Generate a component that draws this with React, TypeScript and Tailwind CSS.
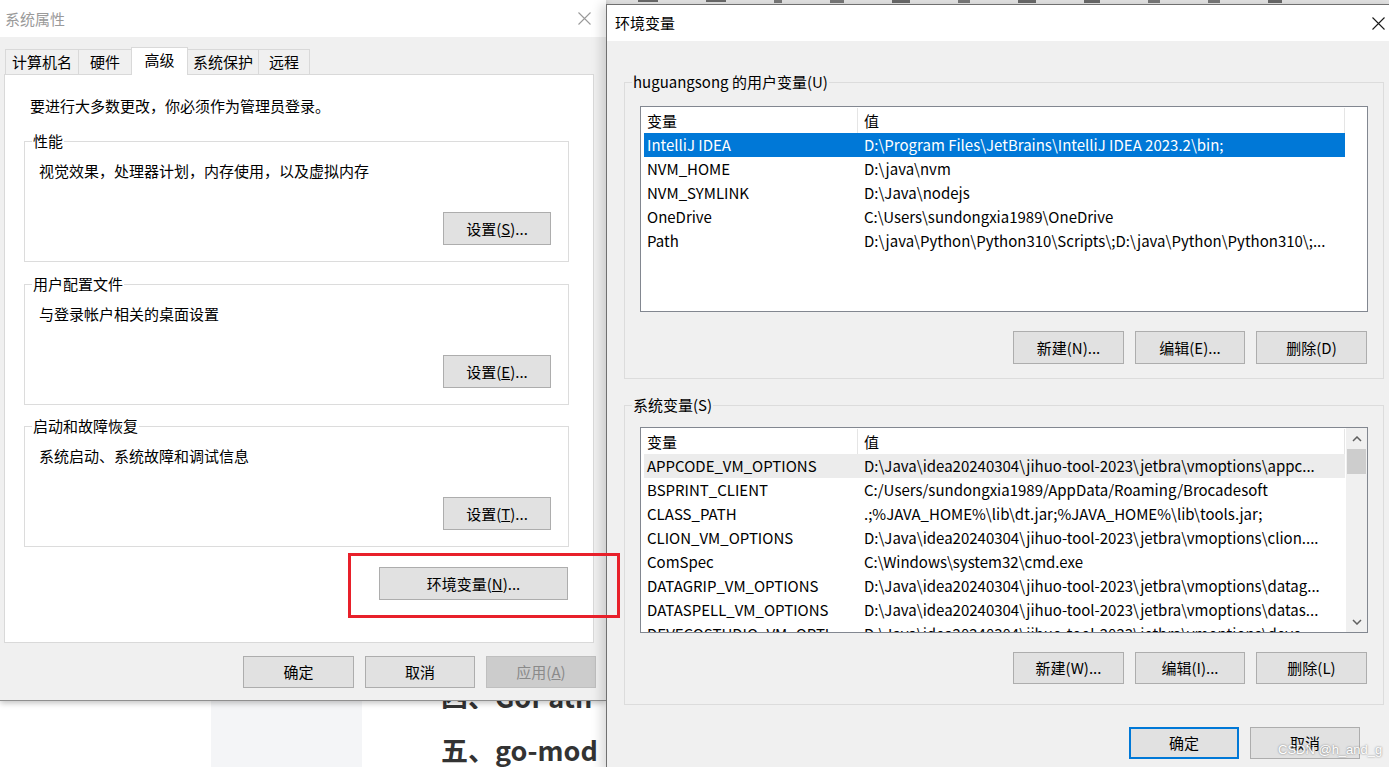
import React from "react";

const FONT = "font-['Noto_Sans_CJK_SC','Liberation_Sans',sans-serif]";

function XIcon({ color }: { color: string }) {
  return (
    <svg width="13" height="13" viewBox="0 0 13 13" className="block">
      <path d="M0.5 0.5L12.5 12.5M12.5 0.5L0.5 12.5" stroke={color} strokeWidth="1.1" fill="none" />
    </svg>
  );
}

function Chevron({ up }: { up: boolean }) {
  return (
    <svg width="10" height="6" viewBox="0 0 10 6" className="block">
      <path d={up ? "M1 5L5 1L9 5" : "M1 1L5 5L9 1"} stroke="#606060" strokeWidth="1.5" fill="none" />
    </svg>
  );
}

function Btn({ children, className }: { children: React.ReactNode; className: string }) {
  return (
    <div
      className={`flex items-center justify-center bg-[#e1e1e1] border border-[#adadad] text-[15px] leading-[20px] text-black ${className}`}
    >
      {children}
    </div>
  );
}

function Group({
  label,
  desc,
  btn,
  className,
}: {
  label: string;
  desc: string;
  btn: React.ReactNode;
  className: string;
}) {
  return (
    <fieldset className={`border border-[#dcdcdc] w-[545px] ml-[19px] ${className}`}>
      <legend className="ml-[7px] px-[1px] text-[15px] leading-[20px]">{label}</legend>
      <div className="mt-[10px] pl-[14px] h-[20px] text-[15px] leading-[20px]">{desc}</div>
      <div className="mt-[31px] pb-[16px] pr-[17px] flex justify-end">
        <Btn className="w-[108px] h-[33px]">{btn}</Btn>
      </div>
    </fieldset>
  );
}

type Row = [string, string];

const userRows: Row[] = [
  ["IntelliJ IDEA", "D:\\Program Files\\JetBrains\\IntelliJ IDEA 2023.2\\bin;"],
  ["NVM_HOME", "D:\\java\\nvm"],
  ["NVM_SYMLINK", "D:\\Java\\nodejs"],
  ["OneDrive", "C:\\Users\\sundongxia1989\\OneDrive"],
  ["Path", "D:\\java\\Python\\Python310\\Scripts\\;D:\\java\\Python\\Python310\\;..."],
];

const sysRows: Row[] = [
  ["APPCODE_VM_OPTIONS", "D:\\Java\\idea20240304\\jihuo-tool-2023\\jetbra\\vmoptions\\appc..."],
  ["BSPRINT_CLIENT", "C:/Users/sundongxia1989/AppData/Roaming/Brocadesoft"],
  ["CLASS_PATH", ".;%JAVA_HOME%\\lib\\dt.jar;%JAVA_HOME%\\lib\\tools.jar;"],
  ["CLION_VM_OPTIONS", "D:\\Java\\idea20240304\\jihuo-tool-2023\\jetbra\\vmoptions\\clion...."],
  ["ComSpec", "C:\\Windows\\system32\\cmd.exe"],
  ["DATAGRIP_VM_OPTIONS", "D:\\Java\\idea20240304\\jihuo-tool-2023\\jetbra\\vmoptions\\datag..."],
  ["DATASPELL_VM_OPTIONS", "D:\\Java\\idea20240304\\jihuo-tool-2023\\jetbra\\vmoptions\\datas..."],
  ["DEVECOSTUDIO_VM_OPTI", "D:\\Java\\idea20240304\\jihuo-tool-2023\\jetbra\\vmoptions\\deve..."],
];

function VarList({ rows, system }: { rows: Row[]; system: boolean }) {
  return (
    <div className="ml-[15px] w-[728px] h-[206px] border border-[#828790] bg-white overflow-hidden flex">
      <div className="w-[704px] pl-[3px] pt-[1px] flex flex-col shrink-0">
        <div className="flex h-[25px] shrink-0 text-[15px] leading-[20px]">
          <div className="w-[214px] pl-[3px] flex items-center border-r border-[#e5e5e5]">变量</div>
          <div className="w-[487px] pl-[6px] flex items-center border-r border-[#e5e5e5]">值</div>
        </div>
        {rows.map((r, i) => {
          const sel = i === 0;
          const rowCls = sel
            ? system
              ? "bg-[#ececec] text-black"
              : "bg-[#0078d7] text-white"
            : "text-black";
          return (
            <div key={r[0]} className={`flex h-[24px] shrink-0 w-[701px] text-[15px] leading-[20px] ${rowCls}`}>
              <div className="w-[214px] pl-[3px] flex items-center whitespace-nowrap overflow-hidden">{r[0]}</div>
              <div className="w-[487px] pl-[6px] flex items-center whitespace-nowrap overflow-hidden">{r[1]}</div>
            </div>
          );
        })}
      </div>
      {system && (
        <div className="ml-[1px] w-[21px] h-full bg-[#f0f0f0] flex flex-col shrink-0">
          <div className="h-[21px] flex items-center justify-center">
            <Chevron up={true} />
          </div>
          <div className="h-[25px] mx-[1px] bg-[#cdcdcd]" />
          <div className="flex-1" />
          <div className="h-[21px] flex items-center justify-center">
            <Chevron up={false} />
          </div>
        </div>
      )}
    </div>
  );
}

function Tab({ label, className }: { label: string; className: string }) {
  return (
    <div
      className={`-ml-[1px] flex items-center justify-center border-l border-t border-r border-[#d9d9d9] text-[15px] leading-[20px] ${className}`}
    >
      {label}
    </div>
  );
}

export default function App() {
  return (
    <div className={`relative w-[1389px] h-[767px] overflow-hidden bg-white ${FONT}`}>
      {/* background page */}
      <div className="flex flex-col h-full">
        <div className="h-[4px] bg-[#e6e6e6] flex items-start pl-[638px] gap-[48px] shrink-0">
          <div className="w-[20px] h-[2px] bg-[#6a6a6a]" />
          <div className="w-[20px] h-[2px] bg-[#6a6a6a]" />
          <div className="w-[8px] h-[3px] bg-[#7a7a7a]" />
          <div className="w-[14px] h-[3px] bg-[#7a7a7a]" />
          <div className="w-[18px] h-[3px] bg-[#6a6a6a]" />
          <div className="w-[12px] h-[3px] bg-[#7a7a7a]" />
          <div className="w-[18px] h-[3px] bg-[#6a6a6a]" />
          <div className="w-[16px] h-[3px] bg-[#6a6a6a]" />
          <div className="w-[12px] h-[3px] bg-[#7a7a7a]" />
          <div className="w-[12px] h-[3px] bg-[#7a7a7a]" />
          <div className="w-[14px] h-[3px] bg-[#6a6a6a]" />
        </div>
        <div className="flex flex-1">
          <div className="w-[211px] shrink-0" />
          <div className="w-[151px] shrink-0 bg-[#f4f5f7]" />
          <div className="pl-[79px] pt-[697px] flex flex-col text-[27px] font-bold text-[#333] leading-[40px]">
            <div className="h-[8px] overflow-hidden">
              <div className="-mt-[24px] h-[40px] whitespace-nowrap">四、GoPath</div>
            </div>
            <div className="mt-[21px] h-[40px] whitespace-nowrap">五、go-mod</div>
          </div>
        </div>
      </div>

      {/* left window: 系统属性 */}
      <div className="absolute left-0 top-0 w-[606px] h-[701px] bg-[#f0f0f0] border-b border-[#8f8f8f] shadow-[0_2px_6px_rgba(0,0,0,0.25)] flex flex-col text-black">
        <div className="h-[37px] bg-white flex items-center justify-between pl-[5px] pr-[15px] shrink-0">
          <span className="text-[15px] leading-[20px] text-[#9a9a9a]">系统属性</span>
          <XIcon color="#9a9a9a" />
        </div>
        <div className="flex-1 px-[4px] pt-[10px] flex flex-col">
          <div className="relative z-10 -mb-[1px] h-[28px] flex items-end pl-[2px]">
            <Tab label="计算机名" className="w-[74px] h-[25px] mb-[1px] bg-[#f0f0f0]" />
            <Tab label="硬件" className="w-[54px] h-[25px] mb-[1px] bg-[#f0f0f0]" />
            <Tab label="高级" className="w-[57px] h-[28px] bg-white pb-[4px]" />
            <Tab label="系统保护" className="w-[72px] h-[25px] mb-[1px] bg-[#f0f0f0]" />
            <Tab label="远程" className="w-[52px] h-[25px] mb-[1px] bg-[#f0f0f0]" />
          </div>
          <div className="h-[569px] w-[590px] bg-white border border-[#d9d9d9] pt-[21px] flex flex-col">
            <div className="pl-[25px] text-[15px] leading-[20px]">要进行大多数更改，你必须作为管理员登录。</div>
            <Group
              className="mt-[15px]"
              label="性能"
              desc="视觉效果，处理器计划，内存使用，以及虚拟内存"
              btn={<>设置(<span className="underline">S</span>)...</>}
            />
            <Group
              className="mt-[12px]"
              label="用户配置文件"
              desc="与登录帐户相关的桌面设置"
              btn={<>设置(<span className="underline">E</span>)...</>}
            />
            <Group
              className="mt-[11px]"
              label="启动和故障恢复"
              desc="系统启动、系统故障和调试信息"
              btn={<>设置(<span className="underline">T</span>)...</>}
            />
            <div className="mt-[20px] pr-[25px] flex justify-end">
              <Btn className="w-[189px] h-[33px]">
                <>环境变量(<span className="underline">N</span>)...</>
              </Btn>
            </div>
          </div>
          <div className="mt-[13px] pr-[6px] flex justify-end gap-[11px]">
            <Btn className="w-[111px] h-[32px]">确定</Btn>
            <Btn className="w-[110px] h-[32px]">取消</Btn>
            <div className="w-[110px] h-[32px] flex items-center justify-center bg-[#cccccc] border border-[#bfbfbf] text-[15px] leading-[20px] text-[#8a8a8a]">
              应用(<span className="underline">A</span>)
            </div>
          </div>
        </div>
      </div>

      {/* right window: 环境变量 */}
      <div className="absolute left-[606px] top-[4px] w-[790px] h-[770px] bg-[#f0f0f0] border-l border-t border-[#707070] shadow-[-5px_0_10px_rgba(0,0,0,0.14)] flex flex-col text-black">
        <div className="h-[36px] bg-white flex items-center justify-between pl-[8px] pr-[11px] shrink-0">
          <span className="text-[15px] leading-[20px]">环境变量</span>
          <XIcon color="#1a1a1a" />
        </div>
        <div className="pt-[31px] flex flex-col">
          <fieldset className="ml-[17px] w-[760px] border border-[#dcdcdc]">
            <legend className="ml-[7px] px-[1px] text-[15px] leading-[20px]">huguangsong 的用户变量(U)</legend>
            <div className="mt-[14px]">
              <VarList rows={userRows} system={false} />
            </div>
            <div className="mt-[19px] pb-[14px] pr-[16px] flex justify-end gap-[11px]">
              <Btn className="w-[111px] h-[33px]">新建(N)...</Btn>
              <Btn className="w-[110px] h-[33px]">编辑(E)...</Btn>
              <Btn className="w-[111px] h-[33px]">删除(D)</Btn>
            </div>
          </fieldset>
          <fieldset className="mt-[16px] ml-[17px] w-[760px] border border-[#dcdcdc]">
            <legend className="ml-[7px] px-[1px] text-[15px] leading-[20px]">系统变量(S)</legend>
            <div className="mt-[12px]">
              <VarList rows={sysRows} system={true} />
            </div>
            <div className="mt-[19px] pb-[20px] pr-[16px] flex justify-end gap-[11px]">
              <Btn className="w-[111px] h-[32px]">新建(W)...</Btn>
              <Btn className="w-[110px] h-[32px]">编辑(I)...</Btn>
              <Btn className="w-[111px] h-[32px]">删除(L)</Btn>
            </div>
          </fieldset>
          <div className="mt-[22px] ml-[17px] w-[760px] pr-[24px] flex justify-end gap-[11px]">
            <div className="w-[110px] h-[32px] flex items-center justify-center bg-[#e1e1e1] border-2 border-[#0078d7] text-[15px] leading-[20px]">
              确定
            </div>
            <Btn className="w-[110px] h-[32px]">取消</Btn>
          </div>
        </div>
      </div>

      {/* annotation: red box */}
      <div className="absolute left-[348px] top-[553px] w-[272px] h-[65px] border-[3px] border-[#e8202a]" />

      {/* watermark */}
      <div className="absolute left-[1278px] top-[741px] text-[13px] leading-[18px] text-white [text-shadow:0_0_2px_#6b6b6b] font-['Liberation_Sans',sans-serif]">
        CSDN @h_and_g
      </div>
    </div>
  );
}
